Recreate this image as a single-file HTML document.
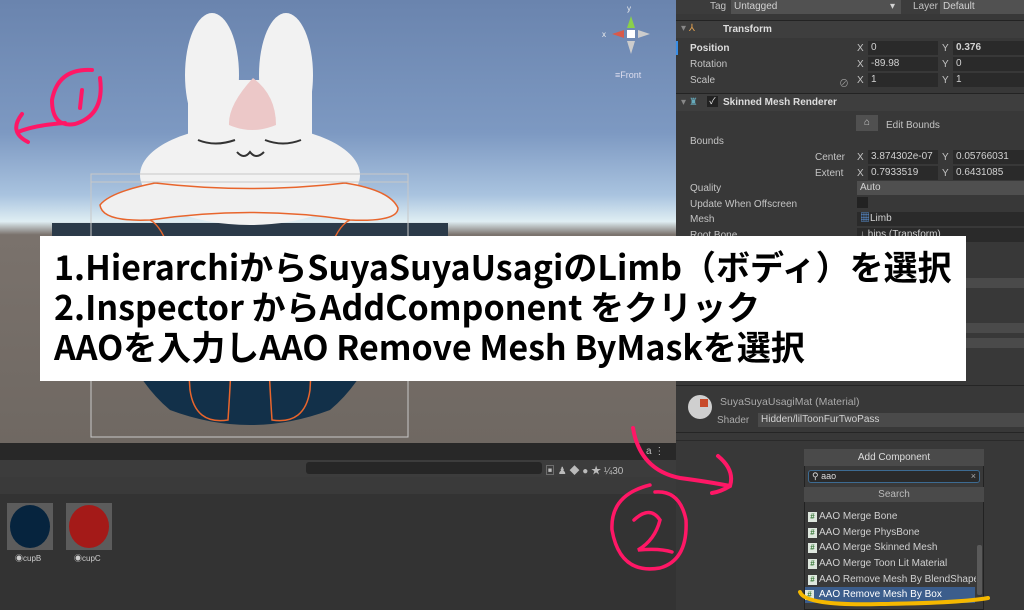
<!DOCTYPE html>
<html><head><meta charset="utf-8"><style>
*{margin:0;padding:0;box-sizing:border-box}
body{width:1024px;height:610px;overflow:hidden;position:relative;background:#383838;font-family:"Liberation Sans","Noto Sans CJK JP",sans-serif;}
.abs{position:absolute}
.scene{left:0;top:0;width:676px;height:443px;background:linear-gradient(#6a84ae 0%,#7d99c2 30%,#a9c3df 44%,#dfeef3 50%,#7a726c 53%,#6f6862 100%);overflow:hidden}
.ins{left:676px;top:0;width:348px;height:610px;background:#383838;color:#c4c4c4;font-size:10px}
.ins div{position:absolute;white-space:nowrap}
.fld{background:#2a2a2a;height:14px;padding-left:3px;line-height:14px;color:#d2d2d2}
.hdr{background:#3e3e3e;height:18px;width:348px;border-top:1px solid #232323}
.box{left:40px;top:236px;width:926px;height:145px;background:#fff;color:#000;font-family:"Noto Sans CJK JP",sans-serif;font-weight:700;font-size:34px;line-height:40px;padding:10px 0 0 14px;white-space:nowrap}
.item{position:absolute;left:808px;width:168px;height:16px;line-height:16px;font-size:10px;color:#d0d0d0;padding-left:11px;white-space:nowrap;overflow:hidden}
.item:before{content:"#";position:absolute;left:0;top:3px;width:9px;height:10px;background:#dfe8df;color:#3a7a3a;font-size:8px;line-height:10px;text-align:center;font-weight:bold}
</style></head><body>
<div class="abs scene">
  <svg width="676" height="443" style="position:absolute;left:0;top:0">
    <rect x="52" y="223" width="396" height="18" fill="#2b3a49"/>
    <path d="M100 240 L400 240 Q390 360 330 410 Q250 440 170 410 Q110 360 100 240Z" fill="#123049"/>
    <ellipse cx="212" cy="75" rx="27" ry="62" fill="#f2f2f2"/>
    <ellipse cx="286" cy="75" rx="27" ry="62" fill="#f2f2f2"/>
    <rect x="188" y="80" width="124" height="90" fill="#f2f2f2"/>
    <ellipse cx="250" cy="175" rx="110" ry="50" fill="#f2f2f2"/>
    <path d="M253 78 Q228 105 229 125 Q252 135 276 125 Q276 95 253 78Z" fill="#ecc8c8"/>
    <path d="M198 140 Q215 147 235 140 M265 140 Q283 147 301 140 M237 152 Q244 160 250 152 Q256 160 264 152" stroke="#333" stroke-width="2" fill="none"/>
    <path d="M155 183 Q110 192 100 205 Q102 222 150 220 Q250 205 350 220 Q398 222 398 208 Q390 190 345 183 Q250 194 155 183Z" fill="#f0f0f0" stroke="#e8652c" stroke-width="1.5"/>
    <path d="M150 220 Q180 235 190 390 Q195 425 228 420 Q236 300 230 245 M350 220 Q318 235 310 390 Q305 425 272 420 Q264 300 270 245" stroke="#e8652c" stroke-width="1.5" fill="none"/>
    <rect x="91" y="174" width="317" height="263" fill="none" stroke="#c8c8c8" stroke-width="1"/>
    <line x1="91" y1="182" x2="408" y2="182" stroke="#c8c8c8"/>
    <polygon points="631,16 627,28 635,28" fill="#8ad04a"/>
    <polygon points="612,34 624,30 624,38" fill="#d85a4a"/>
    <polygon points="650,34 638,30 638,38" fill="#ccc"/>
    <polygon points="631,54 627,41 635,41" fill="#ccc"/>
    <rect x="627" y="30" width="8" height="8" fill="#fff"/>
    <text x="627" y="11" fill="#eee" font-size="8">y</text>
    <text x="602" y="37" fill="#eee" font-size="8">x</text>
    <text x="615" y="78" fill="#dde" font-size="9">≡Front</text>
    <path d="M92 70 Q58 68 52 100 Q52 128 75 124 Q105 115 100 78 M82 90 L80 108 M65 123 Q35 125 18 132 M22 114 Q8 132 28 142" stroke="#ff1766" stroke-width="4" fill="none" stroke-linecap="round"/>
  </svg>
</div>
<div class="abs" style="left:0;top:443px;width:676px;height:17px;background:#282828"></div>
<div class="abs" style="left:0;top:460px;width:676px;height:17px;background:#3c3c3c"></div>
<div class="abs" style="left:306px;top:462px;width:236px;height:12px;background:#262626;border-radius:3px"></div>
<div class="abs" style="left:0;top:477px;width:676px;height:17px;background:#3a3a3a"></div>
<div class="abs" style="left:0;top:494px;width:676px;height:116px;background:#333"></div>
<div class="abs" style="left:7px;top:503px;width:46px;height:47px;background:#5c5c5c"><div style="margin:2px 3px;width:40px;height:43px;border-radius:50%;background:#06243e"></div></div>
<div class="abs" style="left:66px;top:503px;width:46px;height:47px;background:#5c5c5c"><div style="margin:2px 3px;width:40px;height:43px;border-radius:50%;background:#a41a18"></div></div>
<div class="abs" style="left:15px;top:553px;font-size:8px;color:#ccc">◉cupB</div>
<div class="abs" style="left:74px;top:553px;font-size:8px;color:#ccc">◉cupC</div>
<div class="abs" style="left:646px;top:446px;font-size:10px;color:#bbb">a ⋮</div>
<div class="abs" style="left:545px;top:462px;font-size:10px;color:#bbb">▣ ♟ ◆ ● ★ ¼30</div>
<div class="abs ins">
  <div style="left:0;top:0;width:348px;height:14px;background:#3c3c3c"></div>
  <div style="left:34px;top:1px">Tag</div>
  <div class="fld" style="left:55px;top:0;width:170px;background:#515151">Untagged<span style="position:absolute;right:6px">▾</span></div>
  <div style="left:237px;top:1px">Layer</div>
  <div class="fld" style="left:264px;top:0;width:84px;background:#515151">Default</div>
  <div class="hdr" style="left:0;top:20px"></div>
  <div style="left:5px;top:23px;color:#888">▾ <span style="color:#e0a050">⅄</span></div>
  <div style="left:47px;top:24px;font-weight:bold;color:#ddd">Transform</div>
  <div style="left:0;top:41px;width:2px;height:14px;background:#3a8ee6"></div>
  <div style="left:14px;top:43px;font-weight:bold;color:#ddd">Position</div>
  <div style="left:14px;top:59px">Rotation</div>
  <div style="left:14px;top:75px">Scale</div>
  <div style="left:163px;top:75px;color:#999">⊘</div>
  <div style="left:181px;top:43px">X</div><div class="fld" style="left:192px;top:41px;width:70px">0</div>
  <div style="left:266px;top:43px">Y</div><div class="fld" style="left:277px;top:41px;width:71px;font-weight:bold">0.376</div>
  <div style="left:181px;top:59px">X</div><div class="fld" style="left:192px;top:57px;width:70px">-89.98</div>
  <div style="left:266px;top:59px">Y</div><div class="fld" style="left:277px;top:57px;width:71px">0</div>
  <div style="left:181px;top:75px">X</div><div class="fld" style="left:192px;top:73px;width:70px">1</div>
  <div style="left:266px;top:75px">Y</div><div class="fld" style="left:277px;top:73px;width:71px">1</div>
  <div class="hdr" style="left:0;top:93px"></div>
  <div style="left:5px;top:97px;color:#888">▾ <span style="color:#6ab">♜</span></div>
  <div style="left:31px;top:96px;width:11px;height:11px;background:#222;color:#eee;font-size:9px;line-height:11px;text-align:center">✓</div>
  <div style="left:47px;top:97px;font-weight:bold;color:#ddd">Skinned Mesh Renderer</div>
  <div style="left:180px;top:115px;width:22px;height:16px;background:#505050;color:#ccc;text-align:center;line-height:16px">⌂</div>
  <div style="left:210px;top:120px">Edit Bounds</div>
  <div style="left:14px;top:136px">Bounds</div>
  <div style="left:139px;top:152px">Center</div>
  <div style="left:139px;top:168px">Extent</div>
  <div style="left:181px;top:152px">X</div><div class="fld" style="left:192px;top:150px;width:70px">3.874302e-07</div>
  <div style="left:266px;top:152px">Y</div><div class="fld" style="left:277px;top:150px;width:71px">0.05766031</div>
  <div style="left:181px;top:168px">X</div><div class="fld" style="left:192px;top:166px;width:70px">0.7933519</div>
  <div style="left:266px;top:168px">Y</div><div class="fld" style="left:277px;top:166px;width:71px">0.6431085</div>
  <div style="left:14px;top:183px">Quality</div>
  <div class="fld" style="left:181px;top:181px;width:167px;background:#4f4f4f">Auto</div>
  <div style="left:14px;top:199px">Update When Offscreen</div>
  <div style="left:181px;top:197px;width:11px;height:11px;background:#222"></div>
  <div style="left:14px;top:214px">Mesh</div>
  <div class="fld" style="left:181px;top:212px;width:167px"><span style="color:#6af">▦</span>Limb</div>
  <div style="left:14px;top:230px">Root Bone</div>
  <div class="fld" style="left:181px;top:228px;width:167px">↓ hips (Transform)</div>
  <div style="left:290px;top:278px;width:58px;height:10px;background:#4a4a4a"></div>
  <div style="left:290px;top:323px;width:58px;height:10px;background:#4a4a4a"></div>
  <div style="left:290px;top:338px;width:58px;height:10px;background:#4a4a4a"></div>
  <div style="left:0;top:385px;width:348px;height:1px;background:#252525"></div>
  <div style="left:12px;top:395px;width:24px;height:24px;border-radius:50%;background:#cfcfcf;overflow:hidden"><div style="position:absolute;left:12px;top:4px;width:8px;height:8px;background:#c84a2a"></div></div>
  <div style="left:44px;top:396px;color:#aaa;font-size:10.5px">SuyaSuyaUsagiMat (Material)</div>
  <div style="left:41px;top:415px;color:#aaa">Shader</div>
  <div class="fld" style="left:82px;top:413px;width:266px;background:#4a4a4a">Hidden/lilToonFurTwoPass</div>
  <div style="left:0;top:432px;width:348px;height:1px;background:#252525"></div>
  <div style="left:0;top:440px;width:348px;height:1px;background:#2a2a2a"></div>
</div>
<div class="abs" style="left:804px;top:449px;width:180px;height:161px;background:#393939;border:1px solid #222"></div>
<div class="abs" style="left:804px;top:449px;width:180px;height:17px;background:#4a4a4a;color:#ddd;font-size:10px;text-align:center;line-height:17px">Add Component</div>
<div class="abs" style="left:808px;top:470px;width:172px;height:13px;background:#2a2a2a;border:1px solid #3d6b92;border-radius:3px;color:#ddd;font-size:9px;line-height:11px;padding-left:3px">⚲ aao<span style="position:absolute;right:3px;color:#aaa">×</span></div>
<div class="abs" style="left:804px;top:487px;width:180px;height:15px;background:#4a4a4a;color:#bbb;font-size:10px;text-align:center;line-height:15px">Search</div>
<div class="item" style="top:509px">AAO Merge Bone</div>
<div class="item" style="top:525px">AAO Merge PhysBone</div>
<div class="item" style="top:540px">AAO Merge Skinned Mesh</div>
<div class="item" style="top:556px">AAO Merge Toon Lit Material</div>
<div class="item" style="top:572px">AAO Remove Mesh By BlendShape</div>
<div class="item" style="top:587px;left:805px;width:170px;padding-left:14px;background:#3b5d8c;color:#fff">AAO Remove Mesh By Box</div>
<div class="abs" style="left:977px;top:545px;width:5px;height:50px;background:#5a5a5a;border-radius:2px"></div>
<svg class="abs" style="left:0;top:0" width="1024" height="610">
  <path d="M800 592 Q805 606 880 604 Q960 603 988 598" stroke="#f5b800" stroke-width="4" fill="none" stroke-linecap="round"/>
  <path d="M633 428 Q640 470 680 478 Q710 482 730 486 M718 456 Q735 470 730 486 Q720 492 712 493" stroke="#ff1766" stroke-width="4" fill="none" stroke-linecap="round"/>
  <path d="M650 485 Q610 495 612 530 Q620 575 660 568 Q688 560 686 520 Q680 490 655 492 M634 520 Q650 505 660 520 Q655 540 638 550 Q660 548 672 552" stroke="#ff1766" stroke-width="3.5" fill="none" stroke-linecap="round"/>
</svg>
<div class="abs box">1.HierarchiからSuyaSuyaUsagiのLimb（ボディ）を選択<br>2.Inspector からAddComponent をクリック<br>AAOを入力しAAO Remove Mesh ByMaskを選択</div>
</body></html>
